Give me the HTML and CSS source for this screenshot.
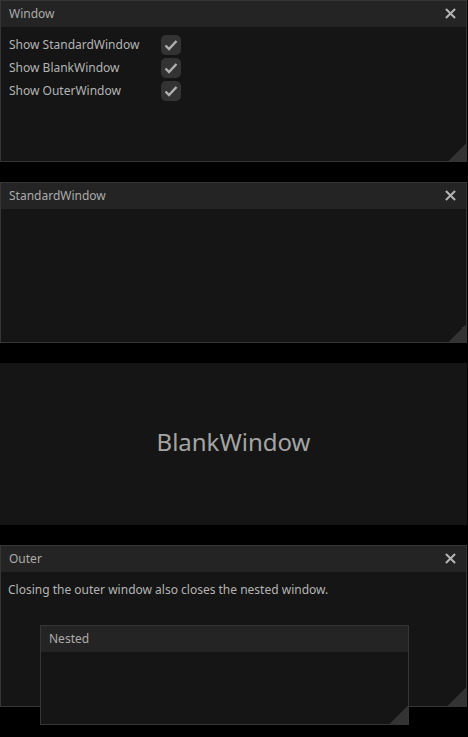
FILE: index.html
```html
<!DOCTYPE html>
<html lang="en">
<head>
<meta charset="utf-8">
<title>Windows</title>
<link rel="stylesheet" href="styles.css">
</head>
<body>
<div class="stack">
  <section class="win">
    <header class="win-head">
      <span class="win-title">Window</span>
      <svg class="close" viewBox="0 0 12 12"><path d="M1 1L11 11M11 1L1 11"/></svg>
    </header>
    <div class="win-body toggles">
      <span class="lbl">Show StandardWindow</span>
      <span class="box"><svg viewBox="0 0 20 20"><path d="M4.5 10.5L8 14L15.5 6"/></svg></span>
      <span class="lbl">Show BlankWindow</span>
      <span class="box"><svg viewBox="0 0 20 20"><path d="M4.5 10.5L8 14L15.5 6"/></svg></span>
      <span class="lbl">Show OuterWindow</span>
      <span class="box"><svg viewBox="0 0 20 20"><path d="M4.5 10.5L8 14L15.5 6"/></svg></span>
    </div>
    <span class="grip"></span>
  </section>

  <section class="win short">
    <header class="win-head">
      <span class="win-title">StandardWindow</span>
      <svg class="close" viewBox="0 0 12 12"><path d="M1 1L11 11M11 1L1 11"/></svg>
    </header>
    <div class="win-body"></div>
    <span class="grip"></span>
  </section>

  <section class="win blank">
    <span class="blank-text">BlankWindow</span>
  </section>

  <section class="win outer">
    <header class="win-head">
      <span class="win-title">Outer</span>
      <svg class="close" viewBox="0 0 12 12"><path d="M1 1L11 11M11 1L1 11"/></svg>
    </header>
    <div class="win-body">
      <p class="note">Closing the outer window also closes the nested window.</p>
    </div>
    <span class="grip"></span>
    <section class="win nested">
      <header class="win-head">
        <span class="win-title">Nested</span>
      </header>
      <div class="win-body"></div>
      <span class="grip"></span>
    </section>
  </section>
</div>
</body>
</html>
```

FILE: styles.css
```css
html, body {
  margin: 0;
  padding: 0;
  background: #000;
}
body {
  width: 468px;
  height: 737px;
  overflow: hidden;
  font-family: "Noto Sans", "Open Sans", sans-serif;
  font-size: 12px;
  color: #b0b0b0;
}
.stack {
  display: flex;
  flex-direction: column;
  gap: 20px;
  width: 467px;
}
.win {
  position: relative;
  box-sizing: border-box;
  height: 162px;
  background: #151515;
  border: 1px solid #353535;
  display: flex;
  flex-direction: column;
}
.short {
  height: 161px;
}
.win-head {
  height: 26px;
  flex: none;
  background: #242424;
  display: flex;
  align-items: center;
  justify-content: space-between;
  padding: 0 8px;
}
.win-title {
  color: #ababab;
  line-height: 1;
  margin-top: -1px;
}
.close {
  width: 11px;
  height: 11px;
  stroke: #b4b4b4;
  stroke-width: 2.2;
  fill: none;
  margin-right: 2px;
  margin-top: -1px;
}
.win-body {
  flex: 1;
  padding: 8px;
}
.toggles {
  display: grid;
  grid-template-columns: 152px 20px;
  grid-auto-rows: 20px;
  row-gap: 3px;
  align-items: center;
  align-content: start;
}
.lbl {
  line-height: 20px;
  color: #b4b4b4;
}
.box {
  width: 20px;
  height: 20px;
  border-radius: 5px;
  background: #333;
  display: flex;
}
.box svg {
  width: 20px;
  height: 20px;
  fill: none;
  stroke: #b0b0b0;
  stroke-width: 2.4;
}
.grip {
  position: absolute;
  right: 0;
  bottom: 0;
  width: 18px;
  height: 18px;
  background: linear-gradient(to bottom right, transparent 50%, #333 50%);
}
.blank {
  border: none;
  align-items: center;
  justify-content: center;
  padding-bottom: 6px;
}
.blank-text {
  font-size: 24px;
  color: #a4a4a4;
}
.outer .win-body {
  padding: 9px 7px;
}
.note {
  margin: 0;
  color: #b4b4b4;
}
.nested {
  position: absolute;
  left: 39px;
  top: 79px;
  width: 369px;
  height: 100px;
}
```
